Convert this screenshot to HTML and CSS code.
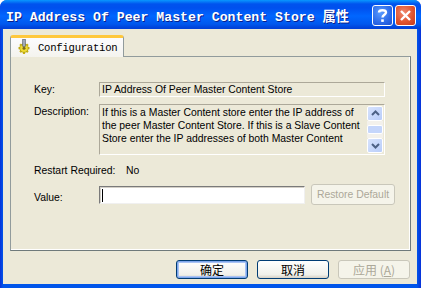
FILE: index.html
```html
<!DOCTYPE html>
<html>
<head>
<meta charset="utf-8">
<link rel="stylesheet" href="styles.css">
</head>
<body>
<div class="window">
  <div class="titlebar">
    <span class="title">IP Address Of Peer Master Content Store 属性</span>
    <div class="tbtns">
      <div class="tbtn help"><svg width="21" height="21" viewBox="0 0 21 21"><path d="M7 7.5 C7 4.5 14 4.5 14 7.5 C14 9.5 10.5 10 10.5 12.5" fill="none" stroke="#fff" stroke-width="2.4"/><rect x="9.2" y="14.3" width="2.6" height="2.6" fill="#fff"/></svg></div>
      <div class="tbtn close"><svg width="21" height="21" viewBox="0 0 21 21"><path d="M6 6 L15 15 M15 6 L6 15" stroke="#fff" stroke-width="2.4"/></svg></div>
    </div>
  </div>
  <div class="client">
    <div class="tabs">
      <div class="tab">
        <svg class="ticon" width="16" height="16" viewBox="0 0 16 16">
          <g stroke="#c8b010" stroke-width="2.2">
            <path d="M8 3.5 V15 M2.5 9.2 H13.5 M4.1 5.3 L11.9 13.1 M11.9 5.3 L4.1 13.1"/>
          </g>
          <circle cx="8" cy="9.2" r="4.2" fill="#f0dc30" stroke="#9a8a10" stroke-width="0.6"/>
          <circle cx="8" cy="9.2" r="1.5" fill="#7a6a20"/>
          <rect x="6.7" y="0.5" width="2.6" height="7" fill="#a0a8b8" stroke="#505868" stroke-width="0.6"/>
        </svg>
        <span>Configuration</span>
      </div>
    </div>
    <div class="panel">
      <div class="row r-key">
        <span class="lbl">Key:</span>
        <div class="ro">IP Address Of Peer Master Content Store</div>
      </div>
      <div class="row r-desc">
        <span class="lbl">Description:</span>
        <div class="desc">
          <div class="desc-text">If this is a Master Content store enter the IP address of the peer Master Content Store. If this is a Slave Content Store enter the IP addresses of both Master Content</div>
          <div class="sbar">
            <div class="sbtn"><svg width="15" height="15" viewBox="0 0 15 15"><path d="M4 9 L7.5 5.5 L11 9" fill="none" stroke="#4d6185" stroke-width="2"/></svg></div>
            <div class="strack"><div class="sthumb"></div></div>
            <div class="sbtn"><svg width="15" height="15" viewBox="0 0 15 15"><path d="M4 6 L7.5 9.5 L11 6" fill="none" stroke="#4d6185" stroke-width="2"/></svg></div>
          </div>
        </div>
      </div>
      <div class="row r-restart">
        <span class="lbl">Restart Required:</span>
        <span class="val">No</span>
      </div>
      <div class="row r-value">
        <span class="lbl">Value:</span>
        <div class="input"><span class="caret"></span></div>
        <div class="btn disabled rd">Restore Default</div>
      </div>
    </div>
    <div class="footer">
      <div class="btn dlg default">确定</div>
      <div class="btn dlg">取消</div>
      <div class="btn dlg disabled">应用 (<u>A</u>)</div>
    </div>
  </div>
</div>
</body>
</html>
```
FILE: styles.css
```css
* { box-sizing: border-box; }
html, body { margin: 0; padding: 0; }
body { width: 421px; height: 288px; overflow: hidden; background: #fff; }

.window {
  width: 421px; height: 288px;
  display: flex; flex-direction: column;
  background: linear-gradient(to right, #0831d9 0, #0055ea 3px, #0055ea 417px, #0831d9 421px);
  border-radius: 7px 7px 0 0;
  font-family: "Liberation Sans", Arial, sans-serif;
  font-size: 10.4px;
  color: #000;
}

.titlebar {
  height: 29px;
  display: flex; align-items: center; justify-content: space-between;
  padding: 0 5px 0 6px;
  border-radius: 7px 7px 0 0;
  background: linear-gradient(to bottom, #0997ff 0, #0053ee 4px, #0050ee 8px, #0066ff 16px, #0058ee 24px, #0041d8 28px, #0041d8 29px);
}
.title {
  font-family: "Liberation Mono", "Noto Sans CJK SC", monospace;
  font-weight: bold;
  font-size: 13.2px;
  color: #fff;
  text-shadow: 1px 1px 0 #0a1e8a;
  white-space: nowrap;
  margin-top: 1px;
}
.tbtns { display: flex; gap: 2px; margin-top: 1px; }
.tbtn {
  width: 21px; height: 21px;
  border: 1px solid #fff;
  border-radius: 3px;
  display: flex; align-items: center; justify-content: center;
}
.tbtn svg { margin: -1px; }
.help { background: radial-gradient(circle at 40% 35%, #5a9cff 0, #2c6ae8 60%, #1b4fd0 100%); }
.close { background: radial-gradient(circle at 40% 35%, #f08a70 0, #e0552f 55%, #c3391a 100%); }

.client {
  flex: 1;
  margin: 0 4px 4px 3px;
  background: #ece9d8;
  display: flex; flex-direction: column;
  padding: 6px 4px 0 7px;
}

.tabs { display: flex; height: 22px; position: relative; z-index: 1; }
.tab {
  width: 114px; height: 22px;
  background: linear-gradient(to bottom, #fcfcfe, #f4f3ee);
  border: 1px solid #919b9c;
  border-bottom: none;
  border-top: 3px solid #ffc83c;
  border-radius: 3px 3px 0 0;
  display: flex; align-items: center;
  padding-left: 5px;
  gap: 6px;
  font-family: "Liberation Mono", monospace;
  font-size: 10.6px;
  letter-spacing: -0.25px;
}
.ticon { flex: none; margin-top: -1px; }

.panel {
  margin-top: -1px;
  height: 195px;
  width: 401px;
  border: 1px solid #919b9c;
  border-bottom-color: #6f7a7b;
  border-right-color: #6f7a7b;
  box-shadow: inset -1px -1px 0 #fff;
  display: flex; flex-direction: column;
  padding: 25px 0 0 23px;
}

.row { display: flex; }
.lbl { width: 65px; flex: none; white-space: nowrap; }
.r-key { align-items: center; height: 15px; }
.ro {
  width: 286px; height: 15px;
  border: 1px solid;
  border-color: #aca899 #fff #fff #aca899;
  padding: 0 0 0 2px;
  line-height: 13px;
  white-space: nowrap;
  overflow: hidden;
}
.r-desc { margin-top: 7px; }
.r-desc .lbl { padding-top: 2px; }
.desc {
  width: 286px; height: 51px;
  border: 1px solid;
  border-color: #aca899 #fff #fff #aca899;
  display: flex;
}
.desc-text {
  flex: 1;
  padding: 1px 2px 0 2px;
  line-height: 13px;
  height: 49px;
  overflow: hidden;
}
.sbar {
  width: 17px; flex: none;
  display: flex; flex-direction: column;
  padding: 1px 1px 1px 0;
}
.sbtn {
  width: 16px; height: 15px;
  border: 1px solid #fff;
  border-radius: 2px;
  background: linear-gradient(to bottom right, #d7e3fd, #b9cdf9);
  display: flex; align-items: center; justify-content: center;
}
.sbtn svg { margin: -1px; }
.strack { flex: 1; background: #f3f1ec; display: flex; align-items: center; }
.sthumb {
  width: 16px; height: 9px;
  background: #c5d6fb;
  border: 1px solid #fff;
  border-radius: 2px;
}

.r-restart { margin-top: 8px; height: 14px; align-items: center; }
.r-restart .lbl { width: 92px; }
.r-value { margin-top: 8px; align-items: center; }
.r-value .lbl { padding-top: 5px; }
.input {
  width: 206px; height: 18px;
  background: #fff;
  border: 1px solid;
  border-color: #7a7a7a #f0f0f0 #f0f0f0 #7a7a7a;
  box-shadow: inset 1px 1px 0 #d4d0c8;
  padding: 2px 0 0 2px;
}
.caret { display: block; width: 1px; height: 13px; background: #000; }
.btn {
  display: flex; align-items: center; justify-content: center;
  border: 1px solid #003c74;
  border-radius: 3px;
  background: linear-gradient(to bottom, #ffffff, #f0f0ea 80%, #d6d0c5);
  white-space: nowrap;
}
.btn.disabled {
  color: #aca899;
  border-color: #c9c7ba;
  background: #f5f4ea;
}
.rd { width: 84px; height: 21px; margin-left: 6px; margin-top: -1px; }

.footer {
  display: flex; justify-content: flex-end;
  gap: 9px;
  margin-top: 9px;
  padding-right: 3px;
}
.dlg {
  width: 72px; height: 19px;
  font-family: "Noto Sans CJK SC", sans-serif;
  font-size: 12px;
}
.dlg.default { box-shadow: inset 0 0 0 1px #7ea6ec, inset 0 0 0 2px #a9c3f3; }
.dlg u { text-decoration: underline; }
```
